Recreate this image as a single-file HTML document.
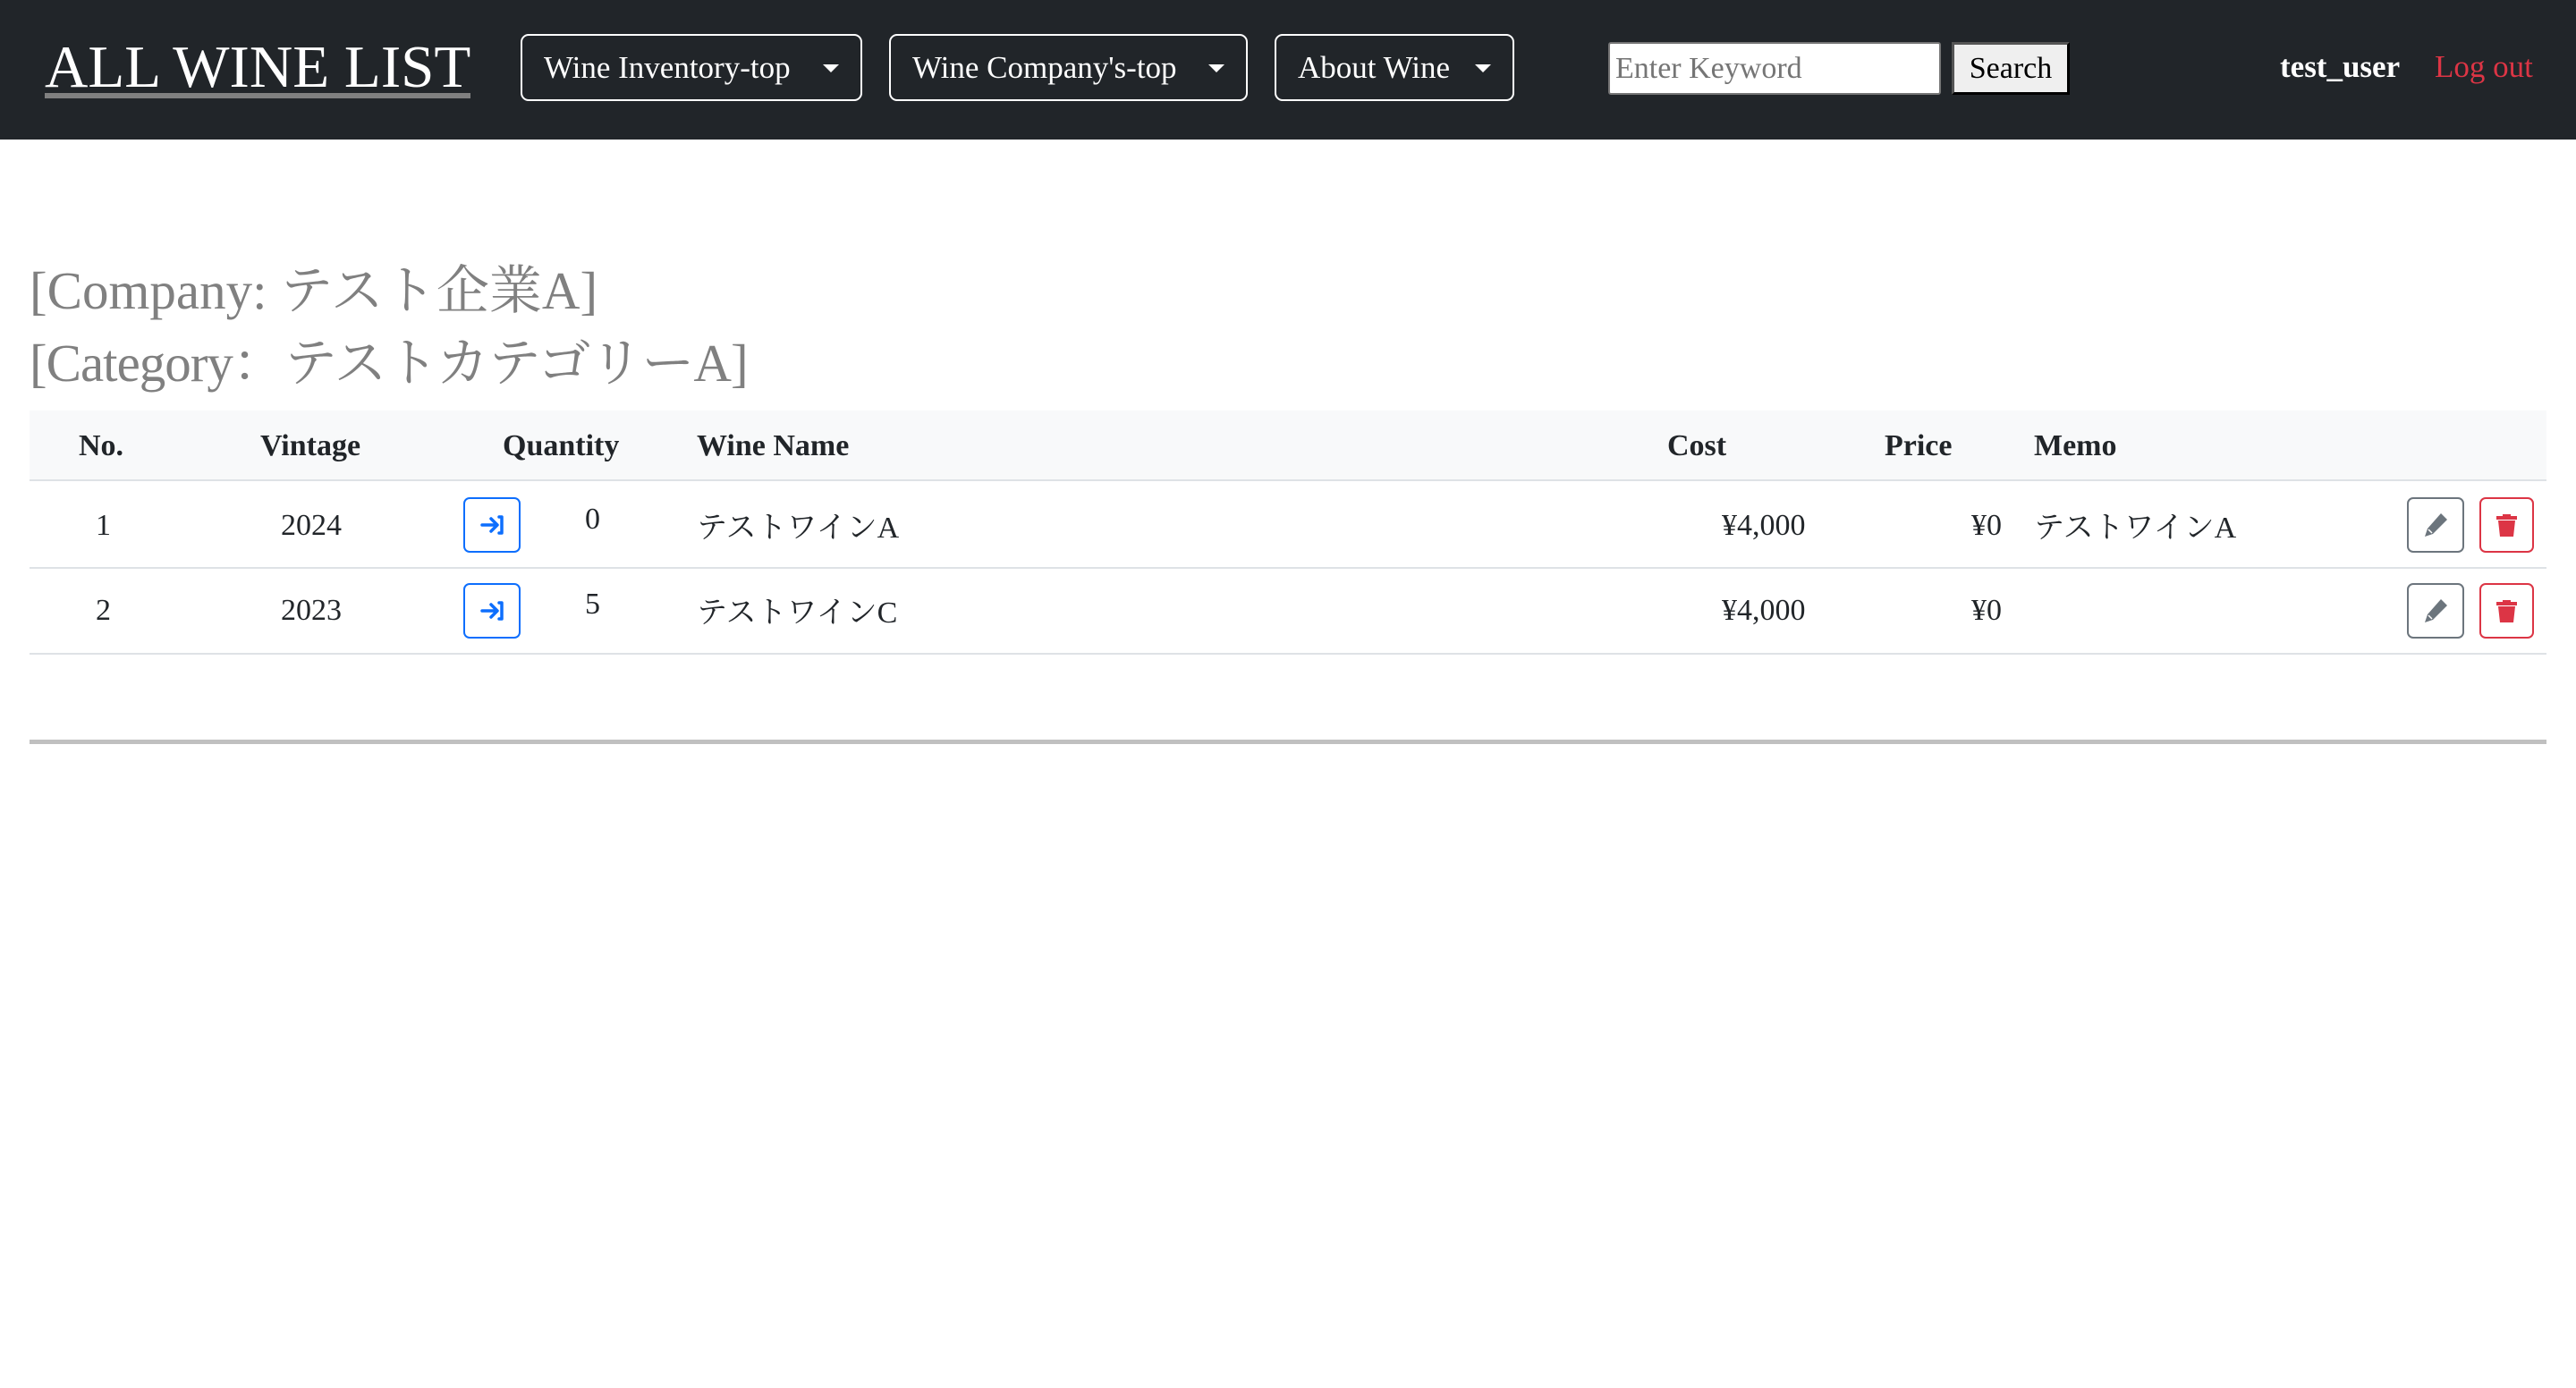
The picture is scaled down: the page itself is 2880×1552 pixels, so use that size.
<!DOCTYPE html>
<html><head><meta charset="utf-8"><style>
*{box-sizing:border-box;margin:0;padding:0}
body{width:2880px;height:1552px;background:#fff;font-family:"Liberation Serif","Noto Serif CJK SC",serif;color:#212529;position:relative;overflow:hidden}
.nav{position:absolute;left:0;top:0;width:2880px;height:156px;background:#212529}
.a{position:absolute;white-space:nowrap}
.logo{left:50px;top:30px;font-size:67px;color:#fff;line-height:90px;border-bottom:6px solid #808080;height:80px}
.dd{position:absolute;top:38px;height:75px;border:2px solid #fff;border-radius:9px;color:#fff;font-size:35px;line-height:71px;padding-left:24px}
.dd:after{content:"";position:absolute;right:24px;top:32px;border-left:9px solid transparent;border-right:9px solid transparent;border-top:9px solid #fff}
.th{font-weight:bold;font-size:34px;top:480px}
.td{font-size:34px}
.ib{position:absolute;width:64px;height:62px;border:2px solid;border-radius:7px}
</style></head><body>
<div class="nav">
<div class="a logo">ALL WINE LIST</div>
<div class="dd" style="left:582px;width:382px">Wine Inventory-top</div>
<div class="dd" style="left:994px;width:401px">Wine Company's-top</div>
<div class="dd" style="left:1425px;width:268px">About Wine</div>
<div class="a" style="left:1798px;top:47px;width:372px;height:59px;background:#fff;border:2px solid #767676;border-radius:3px;font-size:34px;color:#757575;line-height:55px;padding-left:6px">Enter Keyword</div>
<div class="a" style="left:2182px;top:47px;width:132px;height:59px;background:#efefef;border:3px solid;border-color:#555 #000 #000 #555;font-size:34px;color:#000;line-height:53px;text-align:center">Search</div>
<div class="a" style="left:2549px;top:50px;font-size:35px;font-weight:bold;color:#fff;line-height:50px">test_user</div>
<div class="a" style="left:2722px;top:50px;font-size:35px;color:#dc3545;line-height:50px">Log out</div>
</div>
<div class="a" style="left:33px;top:285px;font-size:59px;color:#808080;line-height:80px">[Company: テスト企業A]</div>
<div class="a" style="left:33px;top:366px;font-size:59px;color:#808080;line-height:80px;letter-spacing:-1px">[Category：テストカテゴリーA]</div>
<div class="a" style="left:33px;top:459px;width:2814px;height:79px;background:#f8f9fa;border-bottom:2px solid #dee2e6"></div>
<div class="a" style="left:33px;top:634px;width:2814px;height:2px;background:#dee2e6"></div>
<div class="a" style="left:33px;top:730px;width:2814px;height:2px;background:#dee2e6"></div>
<div class="a" style="left:33px;top:827px;width:2814px;height:5px;background:#c0c0c0"></div>
<div class="a th" style="left:88px">No.</div>
<div class="a th" style="left:291px">Vintage</div>
<div class="a th" style="left:562px">Quantity</div>
<div class="a th" style="left:779px">Wine Name</div>
<div class="a th" style="left:1864px">Cost</div>
<div class="a th" style="left:2107px">Price</div>
<div class="a th" style="left:2274px">Memo</div>

<div class="a td" style="left:107px;top:569px">1</div>
<div class="a td" style="left:314px;top:569px">2024</div>
<div class="a td" style="left:654px;top:562px">0</div>
<div class="a td" style="left:779px;top:562px">テストワインA</div>
<div class="a td" style="left:1925px;top:569px">¥4,000</div>
<div class="a td" style="left:2204px;top:569px">¥0</div>
<div class="a td" style="left:2274px;top:562px">テストワインA</div>

<div class="a td" style="left:107px;top:664px">2</div>
<div class="a td" style="left:314px;top:664px">2023</div>
<div class="a td" style="left:654px;top:657px">5</div>
<div class="a td" style="left:779px;top:657px">テストワインC</div>
<div class="a td" style="left:1925px;top:664px">¥4,000</div>
<div class="a td" style="left:2204px;top:664px">¥0</div>

<div class="ib" style="left:518px;top:556px;border-color:#0d6efd"><svg width="60" height="58" viewBox="0 0 60 58"><path d="M19 29h16M29 22l7 7-7 7M38 20h3v18h-3" stroke="#0d6efd" stroke-width="3.5" fill="none" stroke-linecap="round" stroke-linejoin="round"/></svg></div>
<div class="ib" style="left:518px;top:652px;border-color:#0d6efd"><svg width="60" height="58" viewBox="0 0 60 58"><path d="M19 29h16M29 22l7 7-7 7M38 20h3v18h-3" stroke="#0d6efd" stroke-width="3.5" fill="none" stroke-linecap="round" stroke-linejoin="round"/></svg></div>

<div class="ib" style="left:2691px;top:556px;border-color:#6c757d"><svg width="60" height="58" viewBox="0 0 60 58"><path d="M36 16l7 7-16 16-9 3 3-9z" fill="#6c757d"/><path d="M22 34l4 4" stroke="#fff" stroke-width="1.5"/></svg></div>
<div class="ib" style="left:2691px;top:652px;border-color:#6c757d"><svg width="60" height="58" viewBox="0 0 60 58"><path d="M36 16l7 7-16 16-9 3 3-9z" fill="#6c757d"/><path d="M22 34l4 4" stroke="#fff" stroke-width="1.5"/></svg></div>
<div class="ib" style="left:2772px;top:556px;border-color:#dc3545;width:61px"><svg width="57" height="58" viewBox="0 0 57 58"><path d="M17 19h23v4H17zM24 17h9v3h-9zM19 24h19l-2 18H21z" fill="#dc3545"/></svg></div>
<div class="ib" style="left:2772px;top:652px;border-color:#dc3545;width:61px"><svg width="57" height="58" viewBox="0 0 57 58"><path d="M17 19h23v4H17zM24 17h9v3h-9zM19 24h19l-2 18H21z" fill="#dc3545"/></svg></div>
</body></html>
